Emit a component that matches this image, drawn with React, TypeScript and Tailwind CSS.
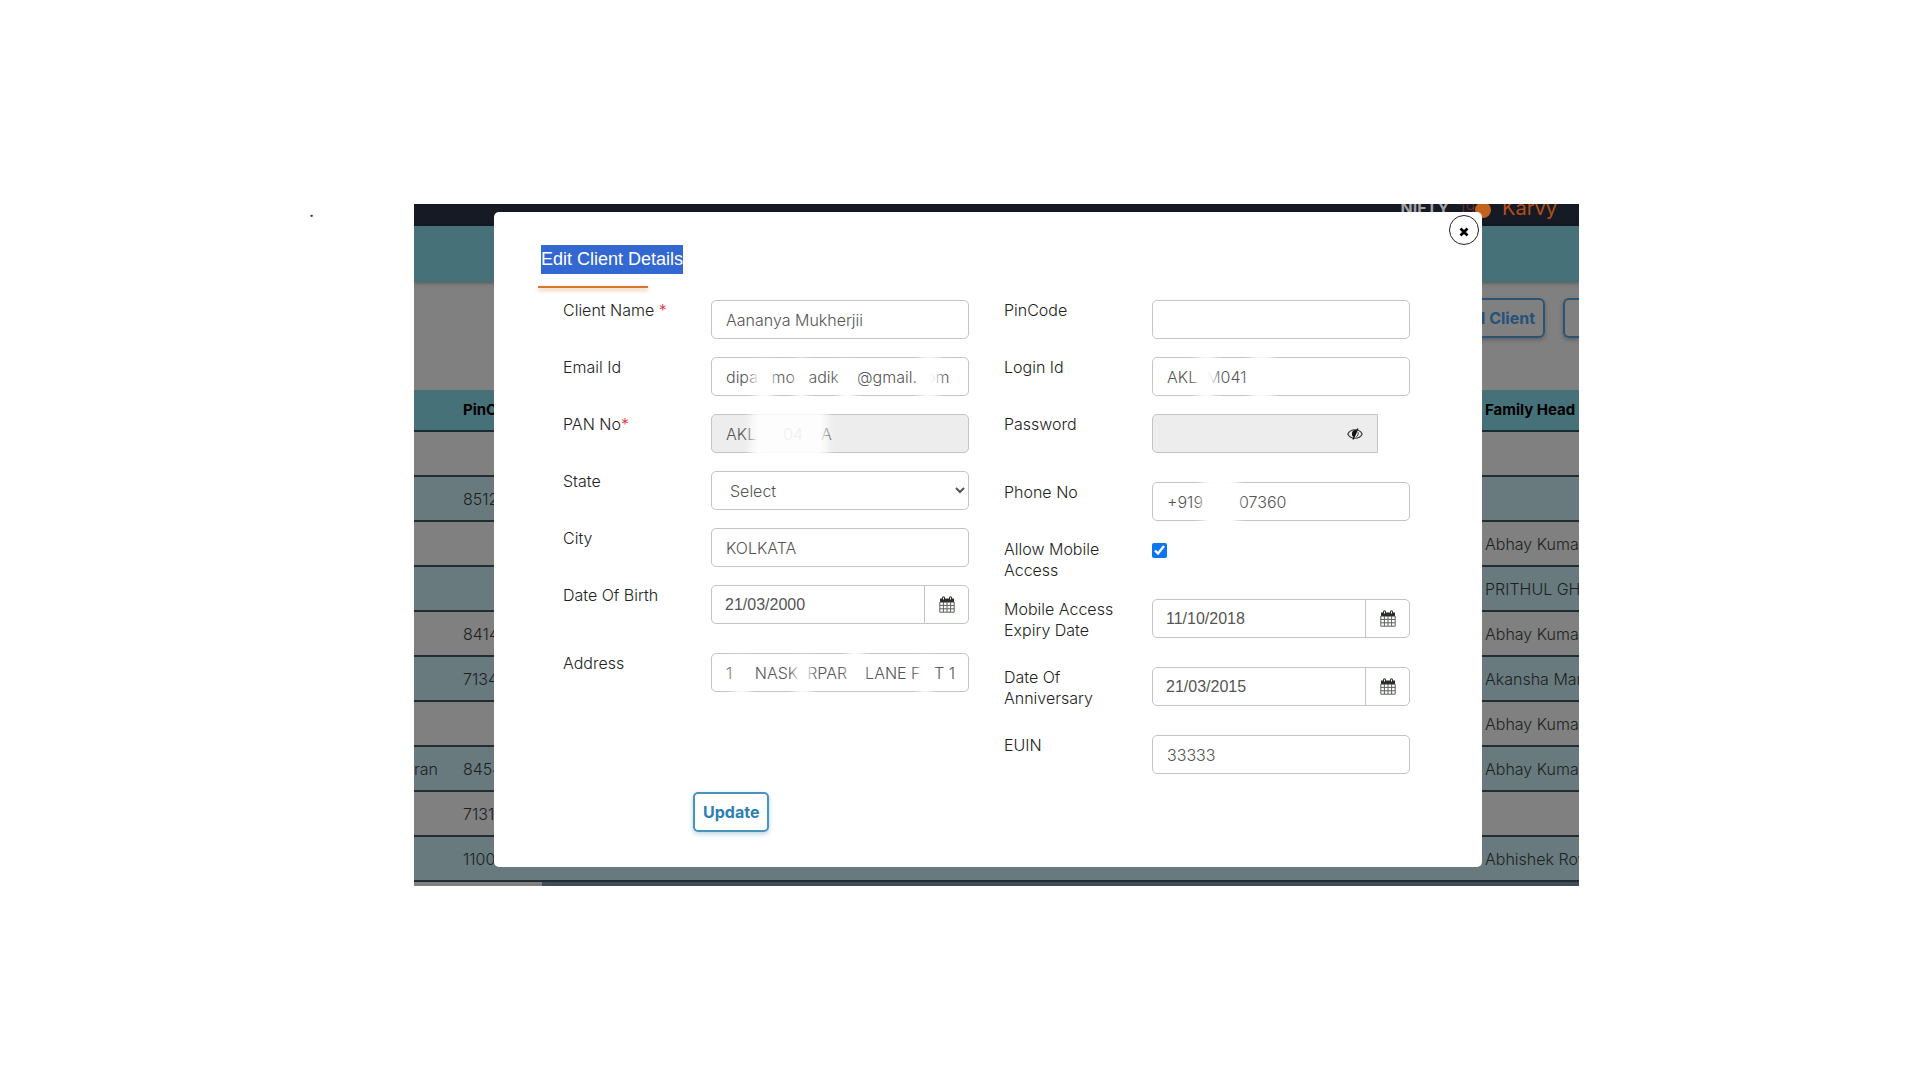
import { ReactNode } from "react";

const rows = [
  { name: "", pin: "", head: "" },
  { name: "", pin: "851212", head: "" },
  { name: "", pin: "", head: "Abhay Kumar" },
  { name: "", pin: "", head: "PRITHUL GHATAK" },
  { name: "", pin: "841401", head: "Abhay Kumar" },
  { name: "", pin: "713401", head: "Akansha Mani" },
  { name: "", pin: "", head: "Abhay Kumar" },
  { name: "ran", pin: "845401", head: "Abhay Kumar" },
  { name: "", pin: "713101", head: "" },
  { name: "", pin: "110001", head: "Abhishek Roy" },
];

const control =
  "h-[39px] w-full min-w-0 rounded-[5px] border border-[#c4c4c4] px-[14px] text-base text-[#555] outline-none";

function CalendarIcon() {
  return (
    <svg width="16" height="17" viewBox="0 0 16 17" fill="none">
      <path d="M1 2.5h14v4H1z" fill="#2b2f2b" />
      <path d="M4.5 1.8v2M11.5 1.8v2" stroke="#2b2f2b" strokeWidth="3" strokeLinecap="round" />
      <path d="M4.5 1.5v2M11.5 1.5v2" stroke="#fff" strokeWidth="1" />
      <path
        d="M0.8 6v10.2h14.4V6M0.8 9.4h14.4M0.8 12.8h14.4M4.4 6v10M8 6v10M11.6 6v10"
        stroke="#5b6159"
        strokeWidth="1"
      />
    </svg>
  );
}

function EyeIcon() {
  return (
    <svg width="16" height="12" viewBox="0 0 16 12" fill="none">
      <path d="M0.8 6C3.6 0.4 12.4 0.4 15.2 6C12.4 11.6 3.6 11.6 0.8 6Z" stroke="#333" strokeWidth="1.1" />
      <path d="M8.6 2C5.4 2 4.2 5 5.4 8L7 9.2L10 2.4Z" fill="#111" />
      <path d="M10.8 0.5L6 11.5" stroke="#111" strokeWidth="1.3" />
      <path d="M11 4.2C11.6 6 10.8 8 9.2 9" stroke="#333" strokeWidth="1" />
    </svg>
  );
}

// hides part of a value
function Smudge({ className }: { className: string }) {
  return <span className={`pointer-events-none absolute rounded-lg bg-white blur-[4px] ${className}`} />;
}

type FieldProps = {
  id: string;
  label: string;
  star?: string;
  tall?: boolean;
  children: ReactNode;
};

function Field({ id, label, star, tall, children }: FieldProps) {
  return (
    <div className={`flex items-start ${tall ? "h-17" : "mb-[18px]"}`}>
      <label htmlFor={id} className="w-37 shrink-0 pr-8 text-base leading-[21px] text-[#222]">
        {label}
        {star && <span className="text-[#e02b35]">{star}</span>}
      </label>
      <div className="relative min-w-0 flex-1">{children}</div>
    </div>
  );
}

function DateInput({ id, value }: { id: string; value: string }) {
  return (
    <div className="flex h-[39px] overflow-hidden rounded-[5px] border border-[#c4c4c4]">
      <input
        id={id}
        defaultValue={value}
        className="w-full min-w-0 flex-1 px-[13px] font-['Liberation_Sans',sans-serif] text-base text-[#555] outline-none"
      />
      <button
        type="button"
        aria-label="Open calendar"
        className="flex w-11 shrink-0 items-center justify-center border-l border-[#c4c4c4]"
      >
        <CalendarIcon />
      </button>
    </div>
  );
}

function ClientsPage() {
  return (
    <div className="overflow-hidden bg-[#808080]">
      <div className="flex h-[22px] items-end justify-end overflow-hidden bg-[#161a24] pr-[22px]">
        <span className="mr-[10px] text-base leading-9 font-bold text-[#a3a3a3]">NIFTY</span>
        <span className="text-base leading-9 text-[#6b3132]">19</span>
        <span className="mr-[11px] mb-2 h-4 w-4 shrink-0 rounded-full bg-[#c1621d]" />
        <span className="text-xl leading-9 font-normal text-[#b34f1c]">Karvy</span>
      </div>
      <div className="h-14 bg-[#467179] shadow-[0_1px_4px_rgba(0,0,0,0.35)]" />
      <div className="flex h-[108px] items-start justify-end gap-[18px] pt-4">
        <button className="h-10 rounded-md border-2 border-[#2a5475] px-2 text-base font-bold text-[#25527a] shadow-[0_2px_4px_rgba(0,0,0,0.25)]">
          Add Client
        </button>
        <button
          aria-label="More"
          className="h-10 w-4 rounded-l-md border-2 border-r-0 border-[#2a5475] shadow-[0_2px_4px_rgba(0,0,0,0.25)]"
        />
      </div>
      <table className="w-full table-fixed border-collapse text-left text-base whitespace-nowrap text-[#1c1f21]">
        <thead>
          <tr className="h-[41px] border-b-2 border-[#1b2a31] bg-[#467179] text-[15px] text-black">
            <th className="w-12" />
            <th className="pl-px">PinCode</th>
            <th className="w-24 overflow-hidden pl-0.5">Family Head</th>
          </tr>
        </thead>
        <tbody>
          {rows.map((row, i) => (
            <tr key={i} className="h-[45px] border-b-2 border-[#222d32] odd:bg-[#808080] even:bg-[#697a7f]">
              <td className="overflow-hidden">{row.name}</td>
              <td className="pl-px">{row.pin}</td>
              <td className="overflow-hidden pl-0.5">{row.head}</td>
            </tr>
          ))}
        </tbody>
      </table>
      <div className="h-1 bg-[#434c5a]">
        <div className="h-full w-[11%] bg-[#808080]" />
      </div>
    </div>
  );
}

function EditClientModal() {
  return (
    <section
      role="dialog"
      aria-labelledby="modal-title"
      className="relative flex-1 self-start rounded-[5px] bg-white pt-[33px] pb-[35px]"
    >
      <button
        aria-label="Close"
        className="absolute top-[3px] right-[3px] flex h-[30px] w-[30px] items-center justify-center rounded-full border border-[#222] bg-white"
      >
        <svg width="10" height="10" viewBox="0 0 10 10" className="mt-1">
          <path d="M1.5 1.5l7 7M8.5 1.5l-7 7" stroke="#000" strokeWidth="2.8" />
        </svg>
      </button>

      <h2
        id="modal-title"
        className="ml-[47px] w-fit bg-[#3367d1] font-['Liberation_Sans',sans-serif] text-lg leading-[29px] text-white"
      >
        Edit Client Details
      </h2>
      <div className="mt-3 ml-11 h-[2px] w-[110px] bg-[#d9752f] shadow-[0_2px_4px_rgba(217,117,47,0.6)]" />

      <form onSubmit={(e) => e.preventDefault()}>
        <div className="mt-3 grid grid-cols-2 gap-x-[35px] pr-[72px] pl-[69px]">
          <div>
            <Field id="name" label="Client Name " star="*">
              <input id="name" defaultValue="Aananya Mukherjii" className={control} />
            </Field>
            <Field id="email" label="Email Id">
              <input id="email" defaultValue="dipa   mo   adik    @gmail.  om" className={control} />
              <Smudge className="top-1 left-[42px] h-10 w-5" />
              <Smudge className="top-0 left-[84px] h-12 w-3" />
              <Smudge className="top-1 left-[128px] h-11 w-4" />
              <Smudge className="-top-1 left-[208px] h-12 w-5" />
            </Field>
            <Field id="pan" label="PAN No" star="*">
              <input id="pan" readOnly defaultValue="AKL      04    A" className={`${control} bg-[#ededed]`} />
              <Smudge className="-top-2 left-10 h-15 w-19 opacity-90" />
            </Field>
            <Field id="state" label="State">
              <select id="state" className={control}>
                <option>Select</option>
              </select>
            </Field>
            <Field id="city" label="City">
              <input id="city" defaultValue="KOLKATA" className={control} />
            </Field>
            <Field id="dob" label="Date Of Birth" tall>
              <DateInput id="dob" value="21/03/2000" />
            </Field>
            <Field id="address" label="Address">
              <input id="address" defaultValue="1     NASK  RPAR    LANE F   T 1" className={control} />
              <Smudge className="top-1 left-[22px] h-11 w-4" />
              <Smudge className="top-1 left-[84px] h-11 w-4" />
              <Smudge className="-top-2 left-[136px] h-10 w-4" />
              <Smudge className="top-1 left-[208px] h-11 w-3" />
            </Field>
          </div>

          <div>
            <Field id="pincode" label="PinCode">
              <input id="pincode" className={control} />
            </Field>
            <Field id="login" label="Login Id">
              <input id="login" defaultValue="AKL  M041" className={control} />
              <Smudge className="-top-1 left-[44px] h-12 w-5" />
              <Smudge className="-top-1 left-[98px] h-12 w-6" />
            </Field>
            <Field id="password" label="Password" tall>
              <div className="mr-8 flex h-[39px] items-center rounded-l-[5px] border border-[#c4c4c4] bg-[#ededed]">
                <input id="password" type="password" readOnly className="h-full w-full min-w-0 flex-1 px-[13px] outline-none" />
                <button type="button" aria-label="Show password" className="mr-[14px]">
                  <EyeIcon />
                </button>
              </div>
            </Field>
            <Field id="phone" label="Phone No">
              <input id="phone" defaultValue="+919        07360" className={control} />
              <Smudge className="-top-2 left-[50px] h-14 w-9" />
            </Field>
            <Field id="mobile" label="Allow Mobile Access">
              <input id="mobile" type="checkbox" defaultChecked className="mt-1 block h-[15px] w-[15px] accent-[#0b76ee]" />
            </Field>
            <Field id="expiry" label="Mobile Access Expiry Date" tall>
              <DateInput id="expiry" value="11/10/2018" />
            </Field>
            <Field id="anniversary" label="Date Of Anniversary" tall>
              <DateInput id="anniversary" value="21/03/2015" />
            </Field>
            <Field id="euin" label="EUIN">
              <input id="euin" defaultValue="33333" className={control} />
            </Field>
          </div>
        </div>

        <button
          type="submit"
          className="ml-[199px] block h-10 rounded-[5px] border-2 border-[#4a93bd] px-2 text-base font-bold text-[#2b80b4] shadow-[0_2px_5px_rgba(43,128,180,0.35)]"
        >
          Update
        </button>
      </form>
    </section>
  );
}

export default function App() {
  return (
    <main className="grid min-h-screen grid-cols-[414fr_1165fr_341fr] items-start bg-white pt-51 pb-10 font-[Inter,sans-serif] font-light">
      <p className="pr-[100px] text-right text-sm leading-4 font-bold text-[#333]">.</p>
      <div className="relative min-w-0">
        <ClientsPage />
        <div className="absolute inset-0 flex pt-2 pr-[97px] pl-20">
          <EditClientModal />
        </div>
      </div>
    </main>
  );
}
